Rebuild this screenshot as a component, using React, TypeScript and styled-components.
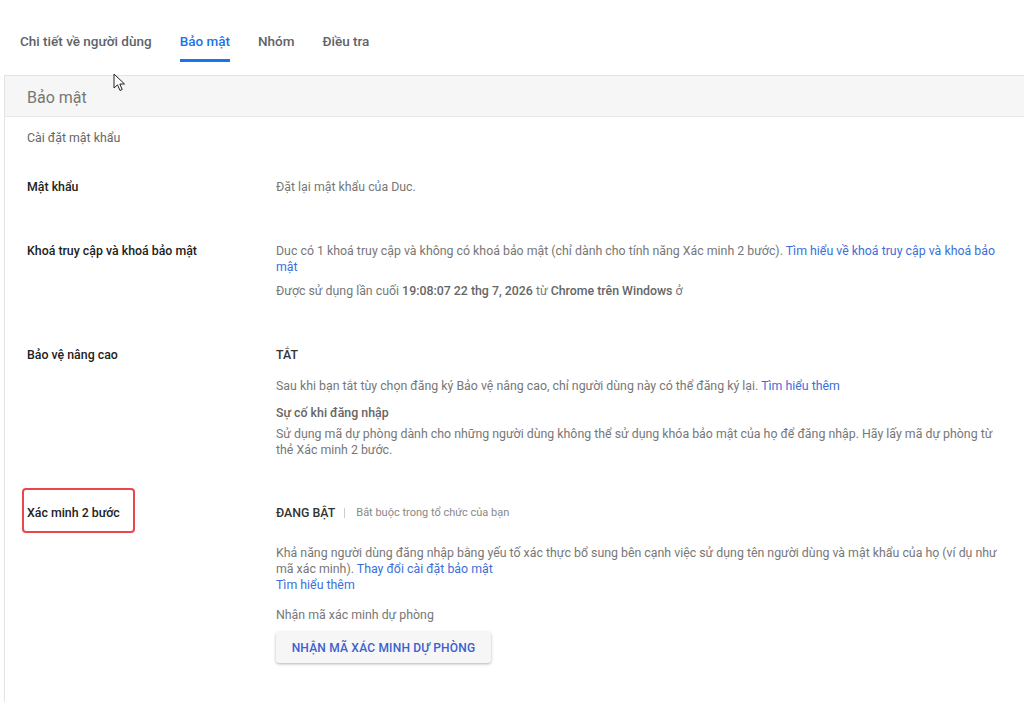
import styled, { createGlobalStyle } from "styled-components";

const GlobalStyle = createGlobalStyle`
    html, body {
        margin: 0;
        padding: 0;
        background: #ffffff;
        overflow: hidden;
        font-family: Roboto, "Noto Sans", Arial, sans-serif;
    }
`;

const Page = styled.div`
    position: relative;
    width: 1024px;
    height: 702px;
    overflow: hidden;
`;

const TabBar = styled.nav`
    display: flex;
    gap: 28px;
    height: 75px;
    padding: 0 20px;
    box-sizing: border-box;
`;

const Tab = styled.div<{ $active?: boolean }>`
    height: 62px;
    padding-top: 32px;
    box-sizing: border-box;
    font-size: 13.5px;
    line-height: 18px;
    font-weight: 500;
    color: ${p => (p.$active ? "#1a73e8" : "#5f6368")};
    border-bottom: 3px solid ${p => (p.$active ? "#1a73e8" : "transparent")};
`;

const Panel = styled.section`
    margin: 0 -20px 0 4px;
    border: 1px solid #e3e3e3;
    border-bottom: none;
    height: 627px;
    background: #fff;
`;

const PanelHeader = styled.header`
    height: 41px;
    display: flex;
    align-items: center;
    padding: 3px 0 0 22px;
    box-sizing: border-box;
    background: #f5f6f5;
    border-bottom: 1px solid #e8e8e8;
    font-size: 16px;
    color: #777;
`;

const SectionTitle = styled.div`
    padding: 13px 22px 0;
    font-size: 12.35px;
    line-height: 16px;
    color: #666;
`;

const Row = styled.div<{ $top: number }>`
    display: grid;
    grid-template-columns: 249px 728px;
    padding: ${p => p.$top}px 22px 0;
    font-size: 12.35px;
    line-height: 16px;
`;

const Label = styled.div`
    position: relative;
    font-weight: 500;
    color: #222;
`;

const Highlight = styled.span`
    position: absolute;
    left: -5px;
    top: -17px;
    width: 113px;
    height: 45px;
    box-sizing: border-box;
    border: 2px solid #e8474b;
    border-radius: 4px;
`;

const Value = styled.div`
    color: #777;
`;

const Para = styled.p<{ $gap?: number }>`
    margin: ${p => p.$gap ?? 0}px 0 0;
`;

const Strong = styled.span<{ $dark?: boolean }>`
    font-weight: 500;
    color: ${p => (p.$dark ? "#333" : "#666")};
`;

const Link = styled.a`
    color: #3d6fd8;
    text-decoration: none;
`;

const StatusLine = styled.div`
    display: flex;
    align-items: center;
`;

const Divider = styled.span`
    width: 1px;
    height: 10px;
    background: #ccc;
    margin: 0 11px 0 9px;
`;

const Note = styled.span`
    font-size: 11px;
    color: #888;
`;

const Button = styled.button`
    display: block;
    margin-top: 9px;
    height: 31px;
    width: 215px;
    border: none;
    border-radius: 3px;
    background: #f5f6f5;
    box-shadow: 0 1px 3px rgba(0, 0, 0, 0.3);
    font-family: inherit;
    font-size: 12px;
    font-weight: 500;
    letter-spacing: 0.2px;
    color: #3d5fd0;
    padding: 0;
`;

const Cursor = styled.svg`
    position: absolute;
    left: 113px;
    top: 73px;
`;

export default function App() {
    return (
        <Page>
            <GlobalStyle />
            <TabBar>
                <Tab>Chi tiết về người dùng</Tab>
                <Tab $active>Bảo mật</Tab>
                <Tab>Nhóm</Tab>
                <Tab>Điều tra</Tab>
            </TabBar>
            <Panel>
                <PanelHeader>Bảo mật</PanelHeader>
                <SectionTitle>Cài đặt mật khẩu</SectionTitle>

                <Row $top={33}>
                    <Label>Mật khẩu</Label>
                    <Value>Đặt lại mật khẩu của Duc.</Value>
                </Row>

                <Row $top={48}>
                    <Label>Khoá truy cập và khoá bảo mật</Label>
                    <Value>
                        <Para>
                            Duc có 1 khoá truy cập và không có khoá bảo mật (chỉ dành cho tính năng Xác minh 2 bước).{" "}
                            <Link>Tìm hiểu về khoá truy cập và khoá bảo mật</Link>
                        </Para>
                        <Para $gap={8}>
                            Được sử dụng lần cuối <Strong>19:08:07 22 thg 7, 2026</Strong> từ{" "}
                            <Strong>Chrome trên Windows</Strong> ở
                        </Para>
                    </Value>
                </Row>

                <Row $top={48}>
                    <Label>Bảo vệ nâng cao</Label>
                    <Value>
                        <Strong $dark>TẮT</Strong>
                        <Para $gap={15}>
                            Sau khi bạn tắt tùy chọn đăng ký Bảo vệ nâng cao, chỉ người dùng này có thể đăng ký lại.{" "}
                            <Link>Tìm hiểu thêm</Link>
                        </Para>
                        <Para $gap={11}>
                            <Strong>Sự cố khi đăng nhập</Strong>
                        </Para>
                        <Para $gap={5}>
                            Sử dụng mã dự phòng dành cho những người dùng không thể sử dụng khóa bảo mật của họ để đăng nhập. Hãy lấy mã dự phòng từ thẻ Xác minh 2 bước.
                        </Para>
                    </Value>
                </Row>

                <Row $top={47}>
                    <Label>
                        Xác minh 2 bước
                        <Highlight />
                    </Label>
                    <Value>
                        <StatusLine>
                            <Strong $dark>ĐANG BẬT</Strong>
                            <Divider />
                            <Note>Bắt buộc trong tổ chức của bạn</Note>
                        </StatusLine>
                        <Para $gap={24}>
                            Khả năng người dùng đăng nhập bằng yếu tố xác thực bổ sung bên cạnh việc sử dụng tên người dùng và mật khẩu của họ (ví dụ như mã xác minh).{" "}
                            <Link>Thay đổi cài đặt bảo mật</Link>
                            <br />
                            <Link>Tìm hiểu thêm</Link>
                        </Para>
                        <Para $gap={14}>Nhận mã xác minh dự phòng</Para>
                        <Button>NHẬN MÃ XÁC MINH DỰ PHÒNG</Button>
                    </Value>
                </Row>
            </Panel>
            <Cursor width="13" height="19" viewBox="0 0 13 19">
                <path d="M1 1 L1 15 L4.5 11.8 L7 17.5 L9.2 16.5 L6.8 11 L11.5 11 Z" fill="#fff" stroke="#222" strokeWidth="1" strokeLinejoin="round" />
            </Cursor>
        </Page>
    );
}
